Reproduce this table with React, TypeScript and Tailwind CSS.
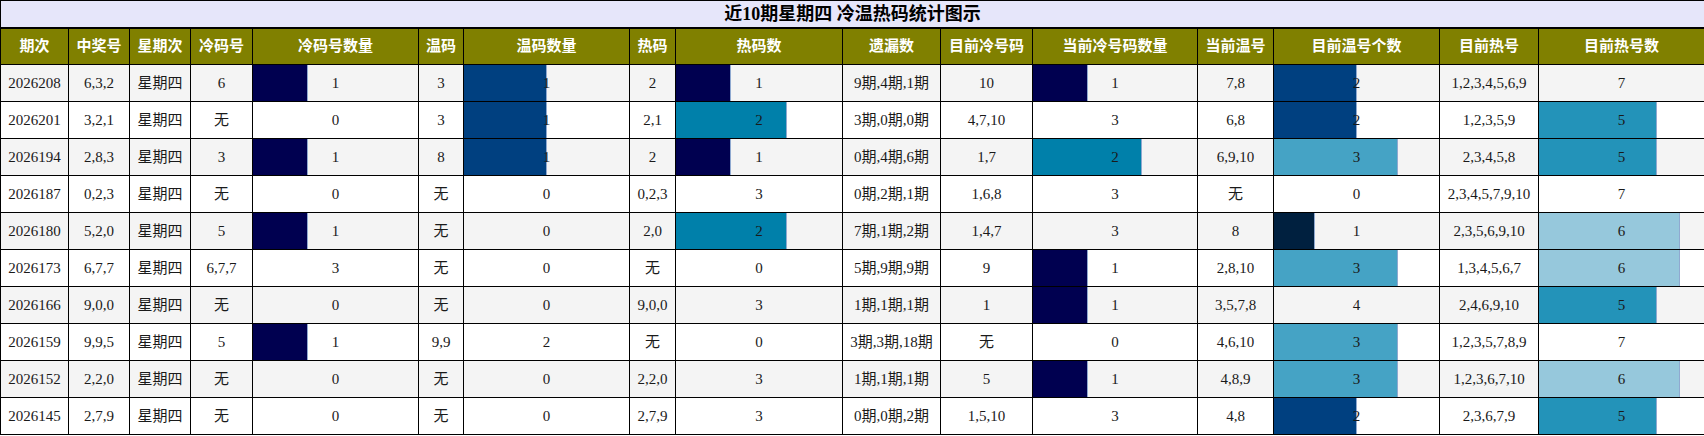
import React from "react";

type Row = string[];

const rows: Row[] = [
  ["2026208", "6,3,2", "星期四", "6", "1", "3", "1", "2", "1", "9期,4期,1期", "10", "1", "7,8", "2", "1,2,3,4,5,6,9", "7"],
  ["2026201", "3,2,1", "星期四", "无", "0", "3", "1", "2,1", "2", "3期,0期,0期", "4,7,10", "3", "6,8", "2", "1,2,3,5,9", "5"],
  ["2026194", "2,8,3", "星期四", "3", "1", "8", "1", "2", "1", "0期,4期,6期", "1,7", "2", "6,9,10", "3", "2,3,4,5,8", "5"],
  ["2026187", "0,2,3", "星期四", "无", "0", "无", "0", "0,2,3", "3", "0期,2期,1期", "1,6,8", "3", "无", "0", "2,3,4,5,7,9,10", "7"],
  ["2026180", "5,2,0", "星期四", "5", "1", "无", "0", "2,0", "2", "7期,1期,2期", "1,4,7", "3", "8", "1", "2,3,5,6,9,10", "6"],
  ["2026173", "6,7,7", "星期四", "6,7,7", "3", "无", "0", "无", "0", "5期,9期,9期", "9", "1", "2,8,10", "3", "1,3,4,5,6,7", "6"],
  ["2026166", "9,0,0", "星期四", "无", "0", "无", "0", "9,0,0", "3", "1期,1期,1期", "1", "1", "3,5,7,8", "4", "2,4,6,9,10", "5"],
  ["2026159", "9,9,5", "星期四", "5", "1", "9,9", "2", "无", "0", "3期,3期,18期", "无", "0", "4,6,10", "3", "1,2,3,5,7,8,9", "7"],
  ["2026152", "2,2,0", "星期四", "无", "0", "无", "0", "2,2,0", "3", "1期,1期,1期", "5", "1", "4,8,9", "3", "1,2,3,6,7,10", "6"],
  ["2026145", "2,7,9", "星期四", "无", "0", "无", "0", "2,7,9", "3", "0期,0期,2期", "1,5,10", "3", "4,8", "2", "2,3,6,7,9", "5"],
];

const headers = [
  "期次", "中奖号", "星期次", "冷码号", "冷码号数量", "温码", "温码数量", "热码", "热码数",
  "遗漏数", "目前冷号码", "当前冷号码数量", "当前温号", "目前温号个数", "目前热号", "目前热号数",
];

const widths = [68, 61, 61, 62, 166, 45, 166, 46, 167, 98, 92, 165, 76, 166, 99, 166];

const barCols: Record<number, { max: number; colors: Record<number, string> }> = {
  4: { max: 3, colors: { 1: "#000050", 2: "#0080aa" } },
  6: { max: 2, colors: { 1: "#004080" } },
  8: { max: 3, colors: { 1: "#000050", 2: "#0080aa" } },
  11: { max: 3, colors: { 1: "#000050", 2: "#0080aa" } },
  13: { max: 4, colors: { 1: "#00203f", 2: "#004080", 3: "#45a3c5" } },
  15: { max: 7, colors: { 5: "#2393b9", 6: "#96c8dc" } },
};

const font = { fontFamily: '"Liberation Serif", "Noto Sans CJK SC", serif' };

export default function App() {
  return (
    <div className="w-[1704px] h-[436px] bg-white overflow-hidden" style={font}>
      <table className="w-[1704px] table-fixed border-collapse">
        <colgroup>
          {widths.map((w, i) => (
            <col key={i} style={{ width: w }} />
          ))}
        </colgroup>
        <thead>
          <tr>
            <th
              colSpan={16}
              className="h-[27px] bg-[#e6e6fa] border border-black border-b-2 p-0 text-[18px] font-bold text-black leading-none"
            >
              近10期星期四 冷温热码统计图示
            </th>
          </tr>
          <tr>
            {headers.map((h, i) => (
              <th
                key={i}
                className="h-[37px] bg-[#808000] border border-black p-0 text-[15px] font-bold text-white leading-none"
              >
                {h}
              </th>
            ))}
          </tr>
        </thead>
        <tbody>
          {rows.map((r, ri) => (
            <tr key={ri} className={ri % 2 === 0 ? "bg-[#f4f4f4]" : "bg-white"}>
              {r.map((c, ci) => {
                const bc = barCols[ci];
                const v = Number(c);
                const showBar = bc && v > 0 && v < bc.max;
                return (
                  <td
                    key={ci}
                    className="relative h-[37px] border border-black p-0 text-center text-[15px] text-[#1a1a1a] leading-none whitespace-nowrap"
                  >
                    {showBar && (
                      <div
                        className="absolute left-0 top-0 bottom-0 border-r border-[#8fa9d0]"
                        style={{
                          width: `${(v / bc.max) * 100}%`,
                          backgroundColor: bc.colors[v],
                        }}
                      />
                    )}
                    <span className="relative">{c}</span>
                  </td>
                );
              })}
            </tr>
          ))}
        </tbody>
      </table>
    </div>
  );
}
